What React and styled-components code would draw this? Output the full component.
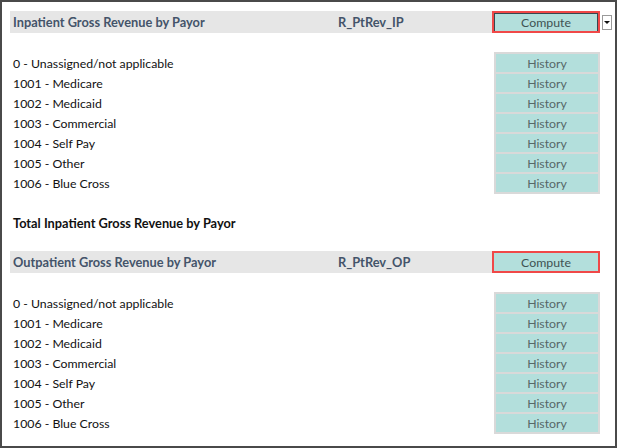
import React from "react";
import styled, { createGlobalStyle } from "styled-components";

const Global = createGlobalStyle`
  html, body {
    margin: 0;
    padding: 0;
    background: #ffffff;
  }
`;

const Sheet = styled.div`
  width: 617px;
  height: 448px;
  box-sizing: border-box;
  border: 2px solid #4a4a4a;
  padding: 9px 0 0 8px;
  font-family: "Lato", "Open Sans", sans-serif;
  font-size: 12.3px;
  color: #111;
  display: flex;
  flex-direction: column;
`;

const Band = styled.div`
  display: grid;
  grid-template-columns: 328px 154px 108px 14px;
  height: 22px;
  align-items: center;
`;

const BandLabel = styled.div`
  background: #e6e6e6;
  height: 100%;
  display: flex;
  align-items: center;
  padding-left: 3px;
  font-weight: 700;
  font-size: 12.8px;
  color: #44546a;
`;

const BandCode = styled(BandLabel)`
  padding-left: 0;
`;

const Compute = styled.div`
  height: 100%;
  box-sizing: border-box;
  border: 2px solid #f04848;
  background: #b3dfdc;
  box-shadow: ${p => (p.$selected ? "inset 1px 1px 0 #37474f, inset -1px 0 0 #37474f" : "none")};
  display: flex;
  align-items: center;
  justify-content: center;
  color: #3e5252;
`;

const Dropdown = styled.div`
  width: 10px;
  height: 15px;
  margin-left: 2px;
  box-sizing: border-box;
  border: 1px solid #9a9a9a;
  background: #fff;
  display: flex;
  align-items: center;
  justify-content: center;
  &::after {
    content: "";
    border-left: 3px solid transparent;
    border-right: 3px solid transparent;
    border-top: 3px solid #111;
  }
`;

const Gap = styled.div`
  height: ${p => p.$h}px;
`;

const Block = styled.div`
  display: grid;
  grid-template-columns: 484px 106px;
`;

const Labels = styled.div`
  display: flex;
  flex-direction: column;
  padding-left: 3px;
`;

const Label = styled.div`
  height: 20px;
  display: flex;
  align-items: center;
`;

const HistoryStack = styled.div`
  background: #d9d9d9;
  padding: 2px;
  margin-top: -1px;
  display: flex;
  flex-direction: column;
  gap: 2px;
  align-self: start;
`;

const History = styled.div`
  height: 18px;
  background: #b3dfdc;
  display: flex;
  align-items: center;
  justify-content: center;
  color: #566868;
`;

const Total = styled.div`
  height: 20px;
  display: flex;
  align-items: center;
  padding-left: 3px;
  font-weight: 700;
  font-size: 12.8px;
  color: #111;
`;

const payors = [
  "0 - Unassigned/not applicable",
  "1001 - Medicare",
  "1002 - Medicaid",
  "1003 - Commercial",
  "1004 - Self Pay",
  "1005 - Other",
  "1006 - Blue Cross",
];

const Section = ({ title, code, selected }) => (
  <>
    <Band>
      <BandLabel>{title}</BandLabel>
      <BandCode>{code}</BandCode>
      <Compute $selected={selected}>Compute</Compute>
      {selected && <Dropdown />}
    </Band>
    <Gap $h={20} />
    <Block>
      <Labels>
        {payors.map(p => (
          <Label key={p}>{p}</Label>
        ))}
      </Labels>
      <HistoryStack>
        {payors.map(p => (
          <History key={p}>History</History>
        ))}
      </HistoryStack>
    </Block>
  </>
);

export default function App() {
  return (
    <>
      <Global />
      <Sheet>
        <Section title="Inpatient Gross Revenue by Payor" code="R_PtRev_IP" selected />
        <Gap $h={19} />
        <Total>Total Inpatient Gross Revenue by Payor</Total>
        <Gap $h={18} />
        <Section title="Outpatient Gross Revenue by Payor" code="R_PtRev_OP" />
      </Sheet>
    </>
  );
}
